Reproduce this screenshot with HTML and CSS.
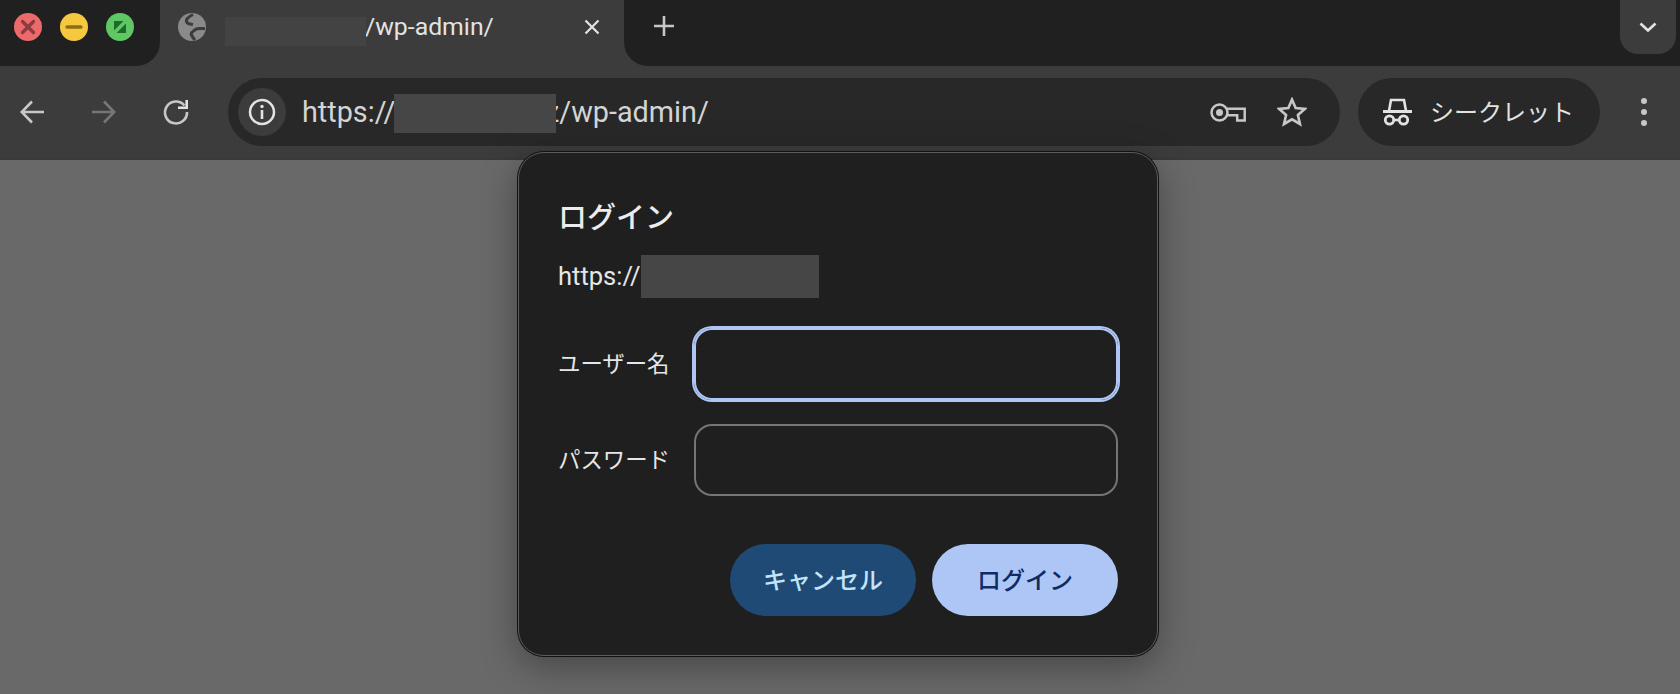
FILE: index.html
```html
<!DOCTYPE html>
<html lang="ja">
<head>
    <meta charset="UTF-8">
    <meta name="viewport" content="width=device-width, initial-scale=1.0">
    <title>ログイン</title>
    <link rel="stylesheet" href="styles.css">
</head>
<body>
    <!-- Tab strip -->
    <header class="tabstrip">
        <div class="strip-start">
            <span class="light light-red">
                <svg viewBox="0 0 28 28" width="28" height="28"><path d="M8.500 8.500l11 11M19.500 8.500l-11 11" stroke="#8c3b40" stroke-width="3.400" stroke-linecap="round"/></svg>
            </span>
            <span class="light light-yellow">
                <svg viewBox="0 0 28 28" width="28" height="28"><path d="M7 14h14" stroke="#8c6f14" stroke-width="3.400" stroke-linecap="round"/></svg>
            </span>
            <span class="light light-green">
                <svg viewBox="0 0 28 28" width="28" height="28"><path d="M8 8h9.500L8 17.500zM20 20h-9.500L20 10.500z" fill="#1c6b2c"/></svg>
            </span>
        </div>
        <div class="tab">
            <svg class="globe" viewBox="0 0 28 28" width="28" height="28">
                <circle cx="14" cy="14" r="14" fill="#8a8a8a"/>
                <path d="M15 1.500C10 4 7 7 9 9.500C10.500 11.500 13 11 15 11.500" fill="none" stroke="#3c3c3c" stroke-width="3"/>
                <path d="M27 15.500C23 16 20 14.500 17.500 16.500C15 18.500 12 19.500 13.500 22C14.500 24 15 25 17 27" fill="none" stroke="#3c3c3c" stroke-width="3"/>
            </svg>
            <span class="redact redact-tab"></span>
            <span class="tab-title">/wp-admin/</span>
            <svg class="tab-close" viewBox="0 0 16 16" width="16" height="16"><path d="M1.500 1.500l13 13M14.500 1.500l-13 13" stroke="#e3e3e3" stroke-width="2.200"/></svg>
        </div>
        <div class="strip-end">
            <svg class="new-tab" viewBox="0 0 20 20" width="20" height="20"><path d="M10 0v20M0 10h20" stroke="#c7c7c7" stroke-width="2.600"/></svg>
            <button class="tab-search" type="button">
                <svg viewBox="0 0 18 10" width="18" height="10"><path d="M1.500 1.500L9 8.500l7.500-7" fill="none" stroke="#e3e3e3" stroke-width="2.600"/></svg>
            </button>
        </div>
    </header>

    <!-- Toolbar -->
    <nav class="toolbar">
        <div class="nav-buttons">
            <svg viewBox="0 0 24 24" width="24" height="24"><path d="M24 12H2M12 1.500L1.800 12 12 22.500" fill="none" stroke="#c7c7c7" stroke-width="2.600"/></svg>
            <svg viewBox="0 0 24 24" width="24" height="24"><path d="M0 12h22M12 1.500L22.200 12 12 22.500" fill="none" stroke="#767676" stroke-width="2.600"/></svg>
            <svg class="reload" viewBox="0 0 28 28" width="28" height="28"><path d="M22.500 7.500A11 11 0 1 0 25 14" fill="none" stroke="#c7c7c7" stroke-width="2.600"/><path d="M16 11h10V2h-2.600v6.400H16z" fill="#e3e3e3"/></svg>
        </div>

        <div class="omnibox">
            <span class="site-info">
                <svg viewBox="0 0 28 28" width="28" height="28"><circle cx="14" cy="14" r="12" fill="none" stroke="#e3e3e3" stroke-width="2.500"/><circle cx="14" cy="8.500" r="1.700" fill="#e3e3e3"/><path d="M14 12v9" stroke="#e3e3e3" stroke-width="2.600"/></svg>
            </span>
            <div class="url">
                <span class="url-scheme">https://</span>
                <span class="redact redact-url"></span>
                <span class="url-tail">z/wp-admin/</span>
            </div>
            <svg class="key-icon" viewBox="0 0 36 19" width="36" height="19"><circle cx="9.500" cy="9.500" r="8" fill="none" stroke="#c7c7c7" stroke-width="2.500"/><circle cx="9.500" cy="9.500" r="3.500" fill="#c7c7c7"/><path d="M17 5.800h17.700v11.700H27.200V12.200H17" fill="none" stroke="#c7c7c7" stroke-width="2.500"/></svg>
            <svg class="star-icon" viewBox="0 0 32 32" width="30" height="30"><path d="M16 2.800l3.900 9 9.700.9-7.300 6.500 2.200 9.600-8.500-5-8.500 5 2.200-9.600-7.300-6.500 9.700-.9z" fill="none" stroke="#c7c7c7" stroke-width="2.800"/></svg>
        </div>

        <div class="incognito">
            <svg viewBox="0 0 29 28" width="29" height="28">
                <path d="M6 13L8 2h13l2 11" fill="none" stroke="#e3e3e3" stroke-width="2.600"/>
                <path d="M0 13.500h29" stroke="#e3e3e3" stroke-width="3"/>
                <circle cx="6.500" cy="22" r="4.200" fill="none" stroke="#e3e3e3" stroke-width="2.800"/>
                <circle cx="20.500" cy="22" r="4.200" fill="none" stroke="#e3e3e3" stroke-width="2.800"/>
                <path d="M10 22h7" stroke="#e3e3e3" stroke-width="2.600"/>
            </svg>
            <span>シークレット</span>
        </div>

        <div class="menu-dots"><i></i><i></i><i></i></div>
    </nav>

    <!-- Login dialog -->
    <main class="page">
        <form class="dialog">
            <h2 class="dialog-title">ログイン</h2>
            <div class="dialog-origin">
                <span class="origin-scheme">https://</span>
                <span class="redact redact-origin"></span>
            </div>
            <div class="fields">
                <label for="username">ユーザー名</label>
                <input class="is-focus" type="text" id="username" name="username">
                <label for="password">パスワード</label>
                <input type="password" id="password" name="password">
            </div>
            <div class="actions">
                <button class="btn btn-cancel" type="button">キャンセル</button>
                <button class="btn btn-login" type="submit">ログイン</button>
            </div>
        </form>
    </main>
</body>
</html>
```

FILE: styles.css
```css
* {
    box-sizing: border-box;
}
body {
    margin: 0;
    height: 694px;
    overflow: hidden;
    background-color: #696969;
    font-family: Roboto, "Noto Sans CJK JP", sans-serif;
    color: #e6e6e6;
}

/* Tab strip */
.tabstrip {
    display: flex;
    height: 66px;
    background-color: #3c3c3c;
}
.strip-start {
    display: flex;
    gap: 18px;
    width: 160px;
    padding: 13px 0 0 14px;
    background-color: #202020;
    border-bottom-right-radius: 24px;
}
.light {
    width: 28px;
    height: 28px;
    border-radius: 50%;
}
.light svg {
    display: block;
}
.light-red {
    background-color: #ec6a6a;
}
.light-yellow {
    background-color: #f5c93f;
}
.light-green {
    background-color: #5fc764;
}
.tab {
    display: flex;
    align-items: center;
    width: 464px;
    height: 54px;
    padding-left: 18px;
}
.globe {
    margin-right: 19px;
}
.tab-title {
    width: 219px;
    margin: 0 0 2px -1px;
    font-size: 24.800px;
    color: #e3e3e3;
}
.strip-end {
    flex: 1;
    display: flex;
    justify-content: space-between;
    padding: 0 4px 0 30px;
    background-color: #202020;
    border-bottom-left-radius: 24px;
}
.new-tab {
    margin-top: 16px;
}
.tab-search {
    display: flex;
    align-items: center;
    justify-content: center;
    width: 56px;
    height: 54px;
    padding: 0;
    border: none;
    border-radius: 0 0 18px 18px;
    background-color: #3c3c3c;
}

/* Grey blocks over the hidden domain */
.redact {
    display: block;
    flex: none;
    position: relative;
    z-index: 1;
    background-color: #464646;
}
.redact-tab {
    width: 141px;
    height: 29px;
    margin-top: 8px;
    background-color: #434343;
}
.redact-url {
    width: 162px;
    height: 39px;
    margin-top: 2px;
}
.redact-origin {
    width: 178px;
    height: 43px;
}

/* Toolbar */
.toolbar {
    display: flex;
    align-items: flex-start;
    height: 94px;
    padding-top: 12px;
    background-color: #3c3c3c;
    border-bottom: 2px solid #393939;
}
.nav-buttons {
    display: flex;
    align-items: center;
    gap: 48px;
    width: 228px;
    height: 68px;
    padding-left: 20px;
}
.reload {
    margin-left: -2px;
}
.omnibox {
    flex: none;
    display: flex;
    align-items: center;
    width: 1112px;
    height: 68px;
    padding: 0 33px 0 10px;
    border-radius: 34px;
    background-color: #282828;
}
.site-info {
    display: flex;
    align-items: center;
    justify-content: center;
    width: 48px;
    height: 48px;
    margin-right: 16px;
    border-radius: 50%;
    background-color: #3c3c3c;
}
.url {
    display: flex;
    align-items: center;
    flex: 1;
    font-size: 28.800px;
    color: #d4d4d4;
}
.url-scheme {
    width: 92px;
}
.url-tail {
    margin-left: -11px;
}
.star-icon {
    margin-left: 31px;
}
.incognito {
    display: flex;
    align-items: center;
    gap: 18px;
    width: 242px;
    height: 68px;
    margin-left: 18px;
    padding-left: 25px;
    border-radius: 34px;
    background-color: #282828;
    font-size: 24px;
    color: #e3e3e3;
}
.incognito span {
    padding-bottom: 4px;
}
.menu-dots {
    display: flex;
    flex-direction: column;
    gap: 5px;
    height: 68px;
    justify-content: center;
    margin-left: 41px;
}
.menu-dots i {
    width: 6px;
    height: 6px;
    border-radius: 50%;
    background-color: #c7c7c7;
}

/* Dialog */
.page {
    height: 534px;
}
.dialog {
    position: absolute;
    left: 518px;
    top: 152px;
    width: 640px;
    height: 504px;
    padding: 47px 39px 0;
    border: 1px solid #5c5c5c;
    border-radius: 26px;
    background-color: #1f1f1f;
    box-shadow: 0 0 0 1px #111, 0 10px 36px rgba(0, 0, 0, 0.35);
}
.dialog-title {
    margin: 0;
    font-size: 29px;
    font-weight: 500;
    line-height: 36px;
    color: #ececec;
}
.dialog-origin {
    display: flex;
    align-items: center;
    height: 43px;
    margin-top: 19px;
    font-size: 25.500px;
}
.origin-scheme {
    width: 83px;
    padding-bottom: 2px;
}
.fields {
    display: grid;
    grid-template-columns: 136px 1fr;
    align-items: center;
    row-gap: 24px;
    margin-top: 30px;
    font-size: 22.400px;
}
.fields label {
    padding-bottom: 4px;
}
.fields input {
    width: 100%;
    height: 72px;
    padding: 0 16px;
    border: 2px solid #757575;
    border-radius: 18px;
    outline: none;
    background-color: transparent;
    color: #e6e6e6;
    font-size: 22px;
}
.fields input.is-focus {
    border-color: #aec6f5;
    box-shadow: 0 0 0 2px #aec6f5;
}
.actions {
    display: flex;
    justify-content: flex-end;
    gap: 16px;
    margin-top: 48px;
}
.btn {
    width: 186px;
    height: 72px;
    padding: 0 0 4px;
    border: none;
    border-radius: 36px;
    font-family: inherit;
    font-size: 24px;
    font-weight: 500;
}
.btn-cancel {
    background-color: #1f4a75;
    color: #c2e4fb;
}
.btn-login {
    background-color: #aec6f5;
    color: #0e2c64;
}
```
